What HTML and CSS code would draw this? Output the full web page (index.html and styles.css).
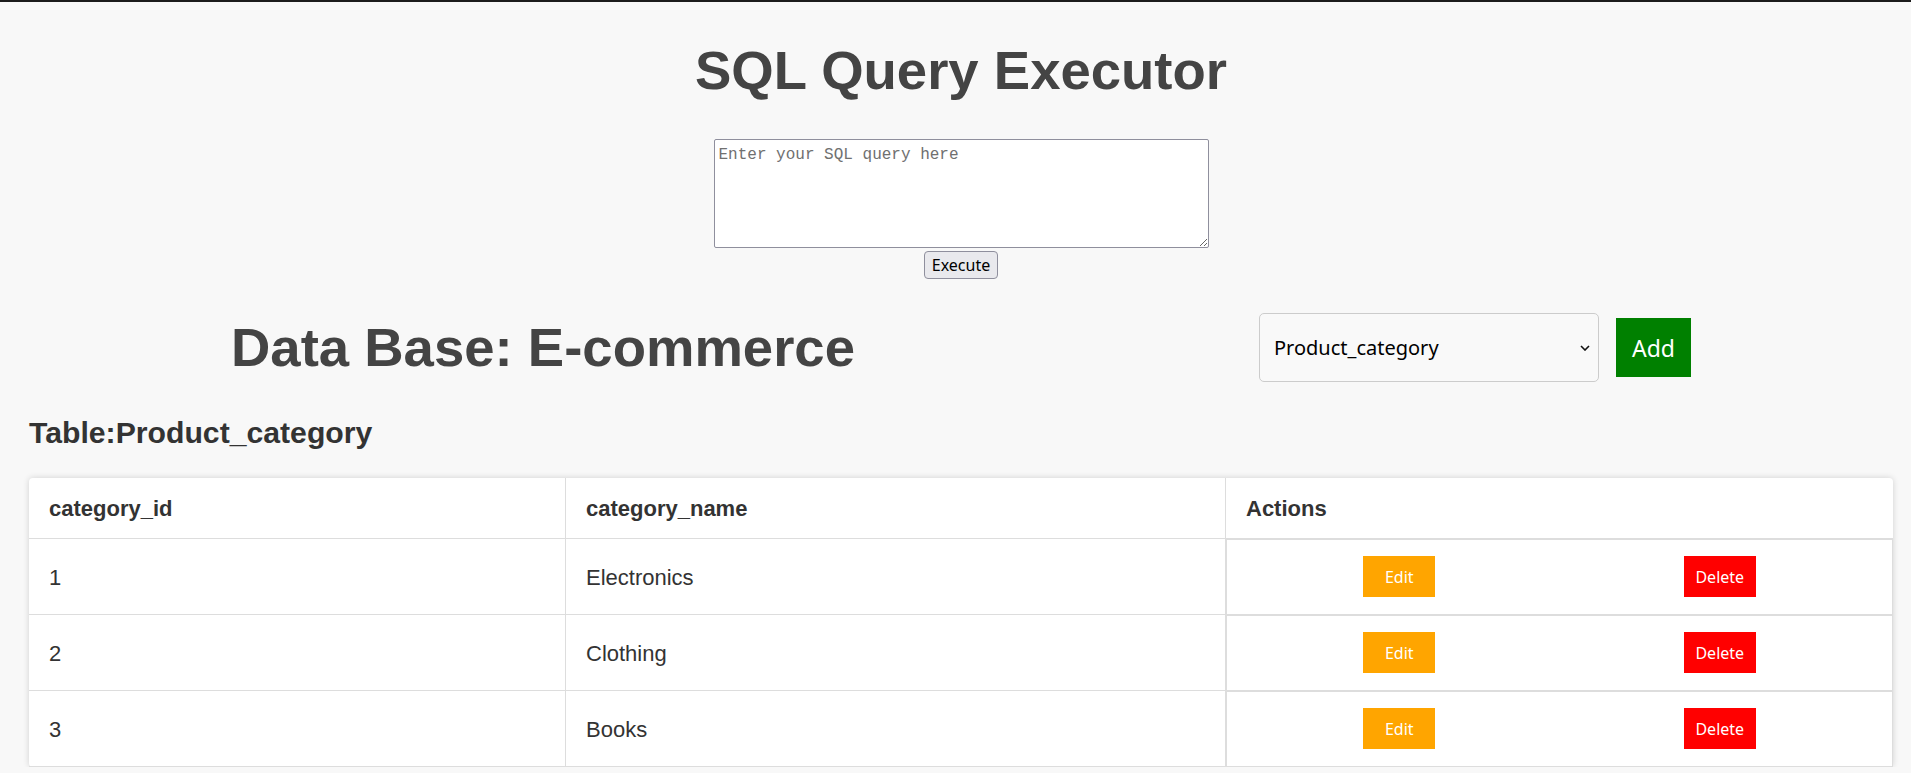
FILE: index.html
```html
<!DOCTYPE html>
<html lang="en">
<head>
<meta charset="utf-8">
<title>SQL Query Executor</title>
<link rel="stylesheet" href="styles.css">
</head>
<body>
<div class="page">
  <h1 class="title">SQL Query Executor</h1>
  <div class="query">
    <textarea class="query-input" placeholder="Enter your SQL query here"></textarea>
    <button class="exec-btn">Execute</button>
  </div>
  <div class="db-row">
    <h1 class="db-title">Data Base: E-commerce</h1>
    <div class="controls">
      <div class="select-wrap">
        <select class="table-select">
          <option>Product_category</option>
        </select>
        <svg class="chevron" width="10" height="6" viewBox="0 0 10 6"><path d="M1 1 L5 5 L9 1" fill="none" stroke="#111" stroke-width="1.6"/></svg>
      </div>
      <button class="add-btn">Add</button>
    </div>
  </div>
  <h2 class="table-title">Table:Product_category</h2>
  <table class="data-table">
    <colgroup>
      <col class="col-id">
      <col class="col-name">
      <col>
    </colgroup>
    <thead>
      <tr>
        <th>category_id</th>
        <th>category_name</th>
        <th class="last">Actions</th>
      </tr>
    </thead>
    <tbody>
      <tr>
        <td>1</td>
        <td>Electronics</td>
        <td class="actions"><div class="action-box"><button class="edit-btn">Edit</button><button class="delete-btn">Delete</button></div></td>
      </tr>
      <tr>
        <td>2</td>
        <td>Clothing</td>
        <td class="actions"><div class="action-box"><button class="edit-btn">Edit</button><button class="delete-btn">Delete</button></div></td>
      </tr>
      <tr>
        <td>3</td>
        <td>Books</td>
        <td class="actions"><div class="action-box"><button class="edit-btn">Edit</button><button class="delete-btn">Delete</button></div></td>
      </tr>
    </tbody>
  </table>
</div>
</body>
</html>
```
FILE: styles.css
```css
html, body {
  margin: 0;
  padding: 0;
  background: #f8f8f8;
  overflow: hidden;
}

.page {
  border-top: 2px solid #1c1c1c;
  padding: 0 18px 0 29px;
  font-family: "Liberation Sans", Arial, sans-serif;
  color: #333;
}

.title {
  margin: 38px 0 37px;
  font-size: 54.5px;
  line-height: 62px;
  font-weight: bold;
  color: #444;
  text-align: center;
}

.query {
  display: flex;
  flex-direction: column;
  align-items: center;
  gap: 3px;
}

.query-input {
  display: block;
  box-sizing: border-box;
  width: 495px;
  height: 109px;
  margin: 0;
  padding: 6px 4px;
  border: 1px solid #8f8f9d;
  border-radius: 2px;
  background: #fff;
  font-family: "Liberation Mono", "DejaVu Sans Mono", monospace;
  font-size: 16px;
  line-height: 18px;
}

.query-input::placeholder {
  color: #707070;
}

.exec-btn {
  box-sizing: border-box;
  height: 28px;
  margin: 0;
  padding: 0 7px;
  border: 1px solid #8f8f9d;
  border-radius: 4px;
  background: #e9e9ed;
  color: #000;
  font-family: "Noto Sans", "Open Sans", sans-serif;
  font-size: 16px;
  line-height: 24px;
}

.db-row {
  margin-top: 34px;
  display: flex;
  justify-content: space-around;
  align-items: center;
}

.db-title {
  margin: 0;
  font-size: 54.5px;
  line-height: 62px;
  font-weight: bold;
  color: #444;
}

.controls {
  display: flex;
  align-items: center;
  gap: 17px;
}

.select-wrap {
  position: relative;
}

.table-select {
  display: block;
  box-sizing: border-box;
  width: 340px;
  height: 69px;
  margin: 0;
  padding: 0 30px 0 14px;
  border: 1px solid #ccc;
  border-radius: 5px;
  background: #f9f9f9;
  color: #000;
  font-family: "Noto Sans", "Open Sans", sans-serif;
  font-size: 20px;
  -webkit-appearance: none;
  appearance: none;
}

.chevron {
  position: absolute;
  left: 321px;
  top: 32px;
  pointer-events: none;
}

.add-btn {
  box-sizing: border-box;
  height: 59px;
  margin: 0;
  padding: 0 16px;
  border: none;
  background: #008000;
  color: #fff;
  font-family: "Noto Sans", "Open Sans", sans-serif;
  font-size: 23px;
}

.table-title {
  margin: 34px 0 28px;
  font-size: 30.2px;
  line-height: 34px;
  font-weight: bold;
  color: #333;
}

.data-table {
  width: 100%;
  table-layout: fixed;
  border-collapse: separate;
  border-spacing: 0;
  background: #fff;
  border-radius: 4px;
  box-shadow: 0 0 6px rgba(0, 0, 0, 0.16);
}

.col-id {
  width: 537px;
}

.col-name {
  width: 660px;
}

.data-table th,
.data-table td {
  padding: 18px 20px 17px;
  text-align: left;
  vertical-align: middle;
  font-size: 22px;
  line-height: 25px;
  color: #333;
  border-bottom: 1px solid #ddd;
  border-right: 1px solid #ddd;
}

.data-table th {
  font-weight: bold;
}

.data-table th.last,
.data-table td.actions {
  border-right: none;
}

.data-table td.actions {
  padding: 0;
}

.action-box {
  display: flex;
  justify-content: space-around;
  align-items: center;
  padding: 16px 12px 17px;
  border: 1px solid #ddd;
  border-bottom: none;
}

.edit-btn,
.delete-btn {
  width: 72px;
  height: 41px;
  margin: 0;
  padding: 0;
  border: none;
  color: #fff;
  font-family: "Noto Sans", "Open Sans", sans-serif;
  font-size: 16px;
}

.edit-btn {
  background: #ffa500;
}

.delete-btn {
  background: #ff0000;
}
```
